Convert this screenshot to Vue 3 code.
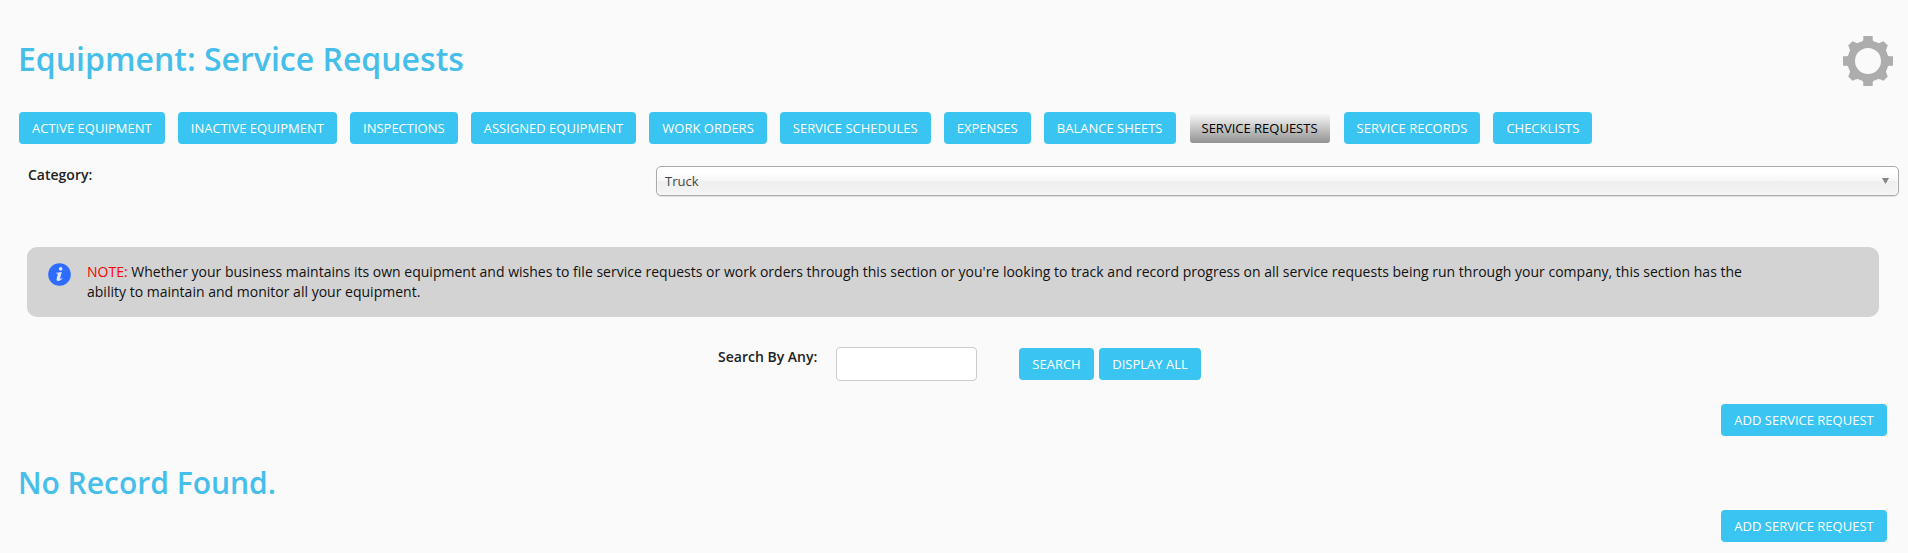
<script setup>
const tabs = [
  'Active Equipment',
  'Inactive Equipment',
  'Inspections',
  'Assigned Equipment',
  'Work Orders',
  'Service Schedules',
  'Expenses',
  'Balance Sheets',
  'Service Requests',
  'Service Records',
  'Checklists',
]
const current = 'Service Requests'
const straightTeeth = [0, 90, 180, 270]
const diagonalTeeth = [45, 135, 225, 315]
</script>

<template>
  <main class="page">
    <header class="header">
      <h1 class="title">Equipment: Service Requests</h1>
      <svg class="gear" viewBox="-25 -25 50 50" aria-label="Settings">
        <circle r="16.8" fill="none" stroke="#adadad" stroke-width="7.6" />
        <path
          v-for="angle in straightTeeth"
          :key="angle"
          :transform="`rotate(${angle})`"
          d="M-8.5-18.5Q-4.8-18.6-4.7-22V-25H4.7V-22Q4.8-18.6 8.5-18.5L7-15.5H-7Z"
          fill="#adadad"
        />
        <path
          v-for="angle in diagonalTeeth"
          :key="angle"
          :transform="`rotate(${angle})`"
          d="M-8.5-18.5Q-5-19.2-4.2-22L-3-25H3L4.2-22Q5-19.2 8.5-18.5L7-15.5H-7Z"
          fill="#adadad"
        />
      </svg>
    </header>

    <nav class="tabs">
      <button v-for="tab in tabs" :key="tab" class="btn" :class="{ active: tab === current }">{{ tab }}</button>
    </nav>

    <section class="category">
      <label class="label">Category:</label>
      <div class="select">
        <span>Truck</span>
        <svg class="arrow" viewBox="0 0 7 6"><path d="M0 0H7L3.5 6Z" fill="#858585" /></svg>
      </div>
    </section>

    <section class="note">
      <svg class="info" viewBox="0 0 24 24">
        <circle cx="12" cy="12" r="11.8" fill="#2e6bff" />
        <circle cx="13.2" cy="6.2" r="1.9" fill="#dce6f8" />
        <path d="M8.7 10.1L14.4 9.4L12.5 16.4Q12.3 17.3 14.8 15.6L15.2 16.1Q12.4 19 10.2 18.8Q8.4 18.6 9 16.3L10.4 11.3L8.5 10.9Z" fill="#dce6f8" />
      </svg>
      <p class="note-text">
        <span class="note-key">NOTE:</span> Whether your business maintains its own equipment and wishes to file service requests or work orders through this section or you're looking to track and record progress on all service requests being run through your company, this section has the<br />ability to maintain and monitor all your equipment.
      </p>
    </section>

    <form class="search" @submit.prevent>
      <label class="label" for="query">Search By Any:</label>
      <input id="query" class="query" type="text" />
      <button class="btn find">Search</button>
      <button class="btn display">Display All</button>
    </form>

    <div class="actions"><button class="btn">Add Service Request</button></div>
    <h2 class="empty">No Record Found.</h2>
    <div class="actions"><button class="btn">Add Service Request</button></div>
  </main>
</template>

<style>
body {
  background: #fafafa;
}
</style>

<style scoped>
.page {
  box-sizing: border-box;
  height: 553px;
  overflow: hidden;
  background: #fafafa;
  color: #222;
  font-family: "Open Sans", "Noto Sans", sans-serif;
  font-size: 14px;
}
.header {
  display: flex;
  justify-content: space-between;
  align-items: flex-start;
  height: 76px;
  padding: 36px 15px 0 18px;
}
.title,
.empty {
  margin: 0;
  color: #45bfea;
  font-weight: 600;
  white-space: nowrap;
}
.title {
  font-size: 32px;
  line-height: 45px;
}
.gear {
  width: 50px;
  height: 50px;
}
.tabs {
  display: flex;
  gap: 13px;
  height: 32px;
  padding-left: 19px;
}
.btn {
  flex: none;
  height: 32px;
  margin: 0;
  padding: 0 13px;
  border: 0;
  border-radius: 4px;
  background: #3ac4f2;
  color: #fff;
  font: 400 13px/32px "Open Sans", "Noto Sans", sans-serif;
  text-transform: uppercase;
  white-space: nowrap;
}
.tabs .btn {
  padding: 0 13.05px;
}
.tabs .btn.active {
  height: 30px;
  margin: 1px 1px 0;
  padding: 0 12px;
  border-radius: 3px;
  background: linear-gradient(#fbfbfb, #929292);
  color: #000;
  line-height: 30px;
}
.category {
  display: flex;
  justify-content: space-between;
  height: 81px;
  padding: 22px 9px 0 28px;
}
.label {
  color: #222;
  font-weight: 600;
  line-height: 20px;
  white-space: nowrap;
}
.category .label {
  margin-top: -1px;
}
.select {
  box-sizing: border-box;
  display: flex;
  align-items: center;
  justify-content: space-between;
  width: 1243px;
  height: 30px;
  padding: 0 9px 0 8px;
  border: 1px solid #aaa;
  border-radius: 5px;
  background: linear-gradient(#fff 20%, #f6f6f6 50%, #eee 52%, #f4f4f4 100%);
  box-shadow: 0 0 3px #fff inset, 0 1px 1px rgba(0, 0, 0, 0.1);
  color: #444;
  font-size: 13px;
}
.arrow {
  width: 7px;
  height: 6px;
}
.note {
  box-sizing: border-box;
  display: flex;
  width: 1852px;
  height: 70px;
  margin-left: 27px;
  padding: 15px 20px;
  border-radius: 10px;
  background: #d3d3d3;
}
.info {
  flex: none;
  width: 23px;
  height: 23px;
  margin: 1px 16px 0 1px;
}
.note-text {
  margin: 0;
  color: #111;
  letter-spacing: 0.008px;
  line-height: 20px;
  white-space: nowrap;
}
.note-key {
  color: #f00;
}
.search {
  display: flex;
  height: 57px;
  padding: 30px 0 0 718px;
}
.search .label {
  width: 100px;
}
.query {
  box-sizing: border-box;
  width: 141px;
  height: 34px;
  margin: 0 42px 0 18px;
  padding: 0 8px;
  border: 1px solid #ccc;
  border-radius: 4px;
  background: #fff;
}
.search .btn {
  margin-top: 1px;
}
.search .find {
  width: 75px;
}
.search .display {
  width: 102px;
  margin-left: 5px;
}
.actions {
  display: flex;
  justify-content: flex-end;
  height: 32px;
  padding-right: 21px;
}
.actions .btn {
  width: 166px;
}
.empty {
  height: 74px;
  padding: 24px 0 0 18px;
  box-sizing: border-box;
  font-size: 30px;
  line-height: 45px;
}
</style>
